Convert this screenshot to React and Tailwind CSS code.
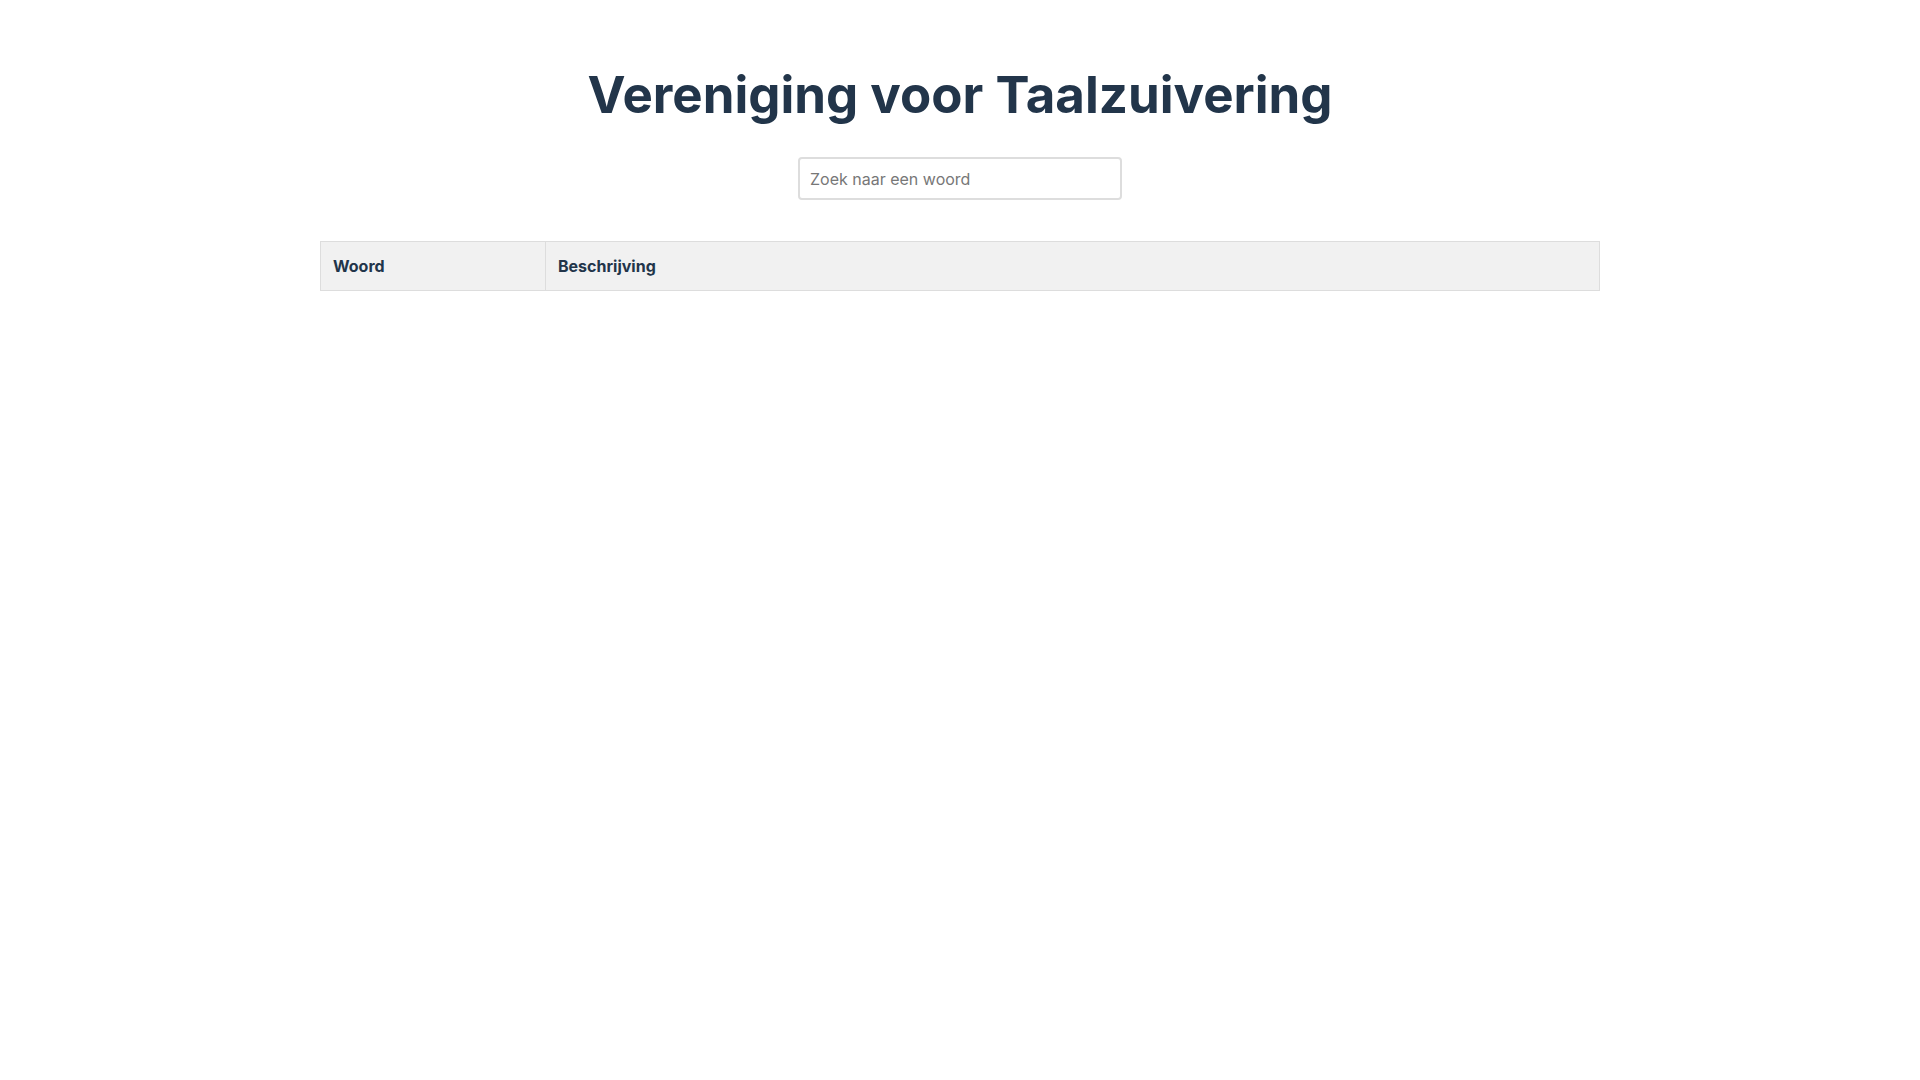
import React, { useState } from 'react';

const App = () => {
  const [query, setQuery] = useState('');

  return (
    <div className="min-h-screen bg-white font-['Inter','Noto_Sans',sans-serif] text-[#22354a]">
      <div className="mx-auto max-w-7xl pt-[64px]">
        <h1 className="text-center text-[51px] font-bold leading-[62px]">
          Vereniging voor Taalzuivering
        </h1>

        {/* Search */}
        <div className="mt-[31px] flex justify-center">
          <input
            type="text"
            value={query}
            onChange={(e) => setQuery(e.target.value)}
            placeholder="Zoek naar een woord"
            className="h-[43px] w-[324px] rounded border-2 border-[#dddddd] px-[10px] text-base text-[#22354a] outline-none placeholder:text-[#777777]"
          />
        </div>

        {/* Word list */}
        <table className="mt-[41px] w-full border-collapse border border-[#dddddd] text-left">
          <thead>
            <tr className="bg-[#f1f1f1]">
              <th className="w-[225px] border border-[#dddddd] px-3 py-3 text-base font-bold">Woord</th>
              <th className="border border-[#dddddd] px-3 py-3 text-base font-bold">Beschrijving</th>
            </tr>
          </thead>
          <tbody></tbody>
        </table>
      </div>
    </div>
  );
};

export default App;
